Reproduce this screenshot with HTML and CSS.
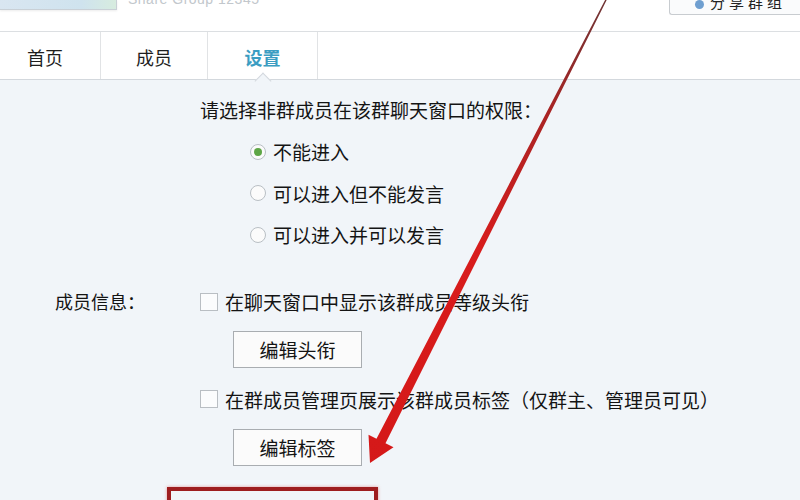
FILE: index.html
```html
<!DOCTYPE html>
<html lang="zh-CN">
<head>
<meta charset="utf-8">
<title>群设置</title>
<link rel="stylesheet" href="styles.css">
</head>
<body>
<div class="page">
  <header class="header">
    <div class="logo-box"></div>
    <div class="group-id">Share Group 12345</div>
    <div class="spacer"></div>
    <div class="top-btn"><span class="top-dot"></span><span class="top-text">分享群组</span></div>
  </header>
  <nav class="tabs">
    <div class="tab">首页</div>
    <div class="tab">成员</div>
    <div class="tab active">设置<span class="caret"></span></div>
  </nav>
  <main class="main">
    <section class="perm">
      <div class="perm-title">请选择非群成员在该群聊天窗口的权限：</div>
      <div class="radio-list">
        <div class="radio-row"><span class="radio checked"></span><span>不能进入</span></div>
        <div class="radio-row"><span class="radio"></span><span>可以进入但不能发言</span></div>
        <div class="radio-row"><span class="radio"></span><span>可以进入并可以发言</span></div>
      </div>
    </section>
    <section class="member">
      <div class="member-label">成员信息：</div>
      <div class="member-opts">
        <div class="check-row"><span class="checkbox"></span><span>在聊天窗口中显示该群成员等级头衔</span></div>
        <div class="btn">编辑头衔</div>
        <div class="check-row second"><span class="checkbox"></span><span>在群成员管理页展示该群成员标签（仅群主、管理员可见）</span></div>
        <div class="btn">编辑标签</div>
      </div>
    </section>
    <div class="highlight"></div>
  </main>
  <svg class="arrow" width="800" height="500" viewBox="0 0 800 500">
    <defs>
      <linearGradient id="ag" x1="0" y1="0" x2="0" y2="500" gradientUnits="userSpaceOnUse">
        <stop offset="0" stop-color="#6e3434"/>
        <stop offset="0.22" stop-color="#a82424"/>
        <stop offset="0.5" stop-color="#d81c1c"/>
        <stop offset="1" stop-color="#d41818"/>
      </linearGradient>
    </defs>
    <polygon fill="url(#ag)" points="612.5,-11.7 385.5,443.3 393.5,447.3 370,463 368.5,434.7 376.5,438.7 611.5,-12.3"/>
  </svg>
</div>
</body>
</html>
```
FILE: styles.css
```css
* { box-sizing: border-box; }
html, body { margin: 0; padding: 0; }
body {
  width: 800px;
  height: 500px;
  overflow: hidden;
  background: #f1f5f9;
  font-family: "Noto Sans CJK SC", "Noto Sans", sans-serif;
  color: #141414;
}
.page { position: relative; width: 800px; height: 500px; overflow: hidden; }

.header {
  height: 32px;
  background: #fff;
  display: flex;
  align-items: flex-start;
  border-bottom: 1px solid #dcdfe2;
}
.logo-box {
  width: 117px;
  height: 10px;
  background: linear-gradient(to right, #d9e6f1, #cfe3ee 70%, #d7ecdf);
  border: 1px solid #c9d0d6;
  border-top: none;
  border-left: none;
  box-shadow: 0 1px 2px rgba(0,0,0,0.08);
}
.group-id {
  margin-left: 11px;
  margin-top: -9px;
  font-family: "Liberation Sans", sans-serif;
  font-size: 14px;
  line-height: 16px;
  letter-spacing: 0.5px;
  color: #c2c7cc;
}
.spacer { flex: 1; }
.top-btn {
  width: 131px;
  height: 15px;
  border: 1px solid #c8ccd0;
  border-top: none;
  border-right: none;
  border-radius: 0 0 0 3px;
  background: #fafbfc;
  display: flex;
  align-items: flex-end;
  padding-left: 25px;
  overflow: hidden;
}
.top-dot {
  width: 9px;
  height: 9px;
  border-radius: 50%;
  background: #6f9fd0;
  margin-bottom: 5px;
  flex: none;
}
.top-text {
  margin-left: 6px;
  font-size: 15px;
  line-height: 15px;
  margin-bottom: 5px;
  letter-spacing: 4px;
  color: #222;
}

.tabs {
  height: 48px;
  background: #fff;
  display: flex;
  border-bottom: 1px solid #d3d8dd;
  margin-left: -9px;
}
.tab {
  position: relative;
  width: 108px;
  border-right: 1px solid #e1e3e5;
  display: flex;
  align-items: center;
  justify-content: center;
  font-size: 18px;
  color: #1e1e1e;
  padding-top: 2px;
}
.tab:nth-child(1) { width: 110px; padding-right: 1px; }
.tab:nth-child(2) { width: 107px; }
.tab:nth-child(3) { width: 110px; }
.tab.active { color: #3b9dc2; font-weight: 700; }
.caret {
  position: absolute;
  left: 50%;
  bottom: -1px;
  width: 12px;
  height: 12px;
  margin-left: -6px;
  transform: translateY(7px) rotate(45deg);
  background: #f1f5f9;
  border-left: 1px solid #d3d8dd;
  border-top: 1px solid #d3d8dd;
}

.main { font-size: 19px; }
.perm { padding-left: 200px; padding-top: 18px; }
.perm-title { line-height: 24px; }
.radio-list { margin-top: 9px; padding-left: 50px; }
.radio-row {
  height: 41.5px;
  display: flex;
  align-items: center;
  gap: 7px;
}
.radio {
  width: 16px;
  height: 16px;
  border-radius: 50%;
  border: 1px solid #b9bfc4;
  background: #fbfbfb;
  display: flex;
  align-items: center;
  justify-content: center;
}
.radio.checked::after {
  content: "";
  width: 8px;
  height: 8px;
  border-radius: 50%;
  background: #5ea646;
}

.member {
  display: flex;
  margin-top: 32px;
  padding-left: 55px;
}
.member-label {
  width: 145px;
  height: 28px;
  line-height: 26px;
  font-size: 18px;
}
.check-row {
  height: 28px;
  display: flex;
  align-items: center;
  gap: 7px;
}
.check-row.second { margin-top: 17px; }
.checkbox {
  width: 18px;
  height: 18px;
  border: 1px solid #b9bec3;
  background: #fbfcfd;
}
.btn {
  margin-top: 15.5px;
  margin-left: 33px;
  width: 129px;
  height: 37px;
  border: 1px solid #a9adb1;
  background: #fbfbfb;
  display: flex;
  align-items: center;
  justify-content: center;
  font-size: 19px;
}
.highlight {
  margin-top: 21px;
  margin-left: 167px;
  width: 211px;
  height: 40px;
  border: 4px solid #9e1d1f;
  box-shadow: 0 0 3px rgba(220, 60, 60, 0.5);
}

.arrow {
  position: absolute;
  left: 0;
  top: 0;
  pointer-events: none;
}
```
